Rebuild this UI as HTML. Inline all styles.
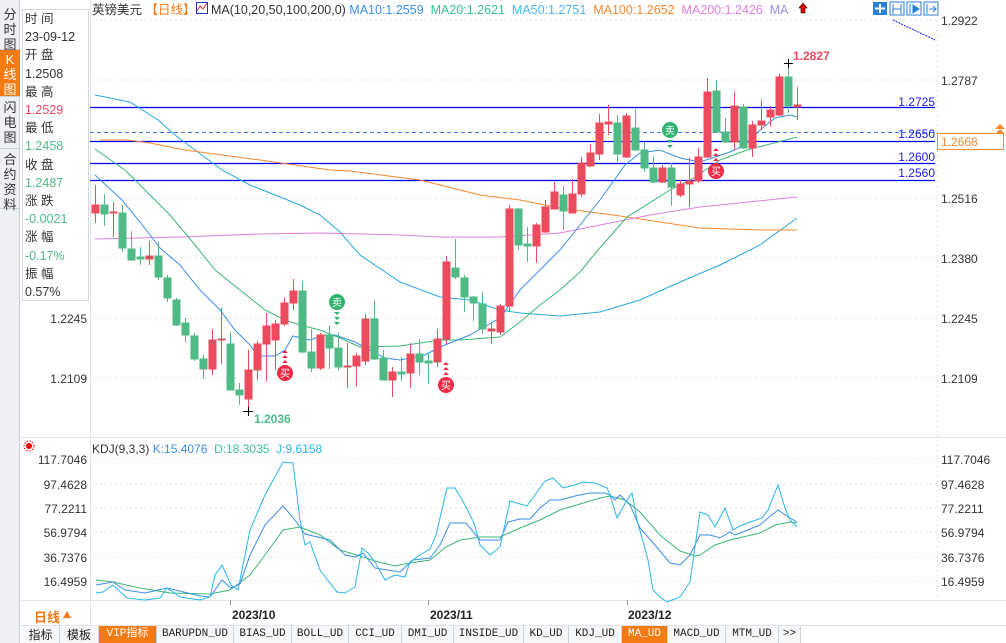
<!DOCTYPE html>
<html><head><meta charset="utf-8">
<style>
*{margin:0;padding:0;box-sizing:border-box}
body{width:1006px;height:643px;overflow:hidden;background:#fff;font-family:"Liberation Sans","Noto Sans CJK SC",sans-serif;position:relative;color:#333}
.abs{position:absolute}
.side{left:0;top:0;width:20px;height:643px;background:#eef0f4;border-right:1px solid #c9ced6}
.st{position:absolute;left:0;width:20px;font-size:13px;line-height:15px;text-align:center;color:#333;border-bottom:1px solid #c9ced6}
.info{left:22px;top:9px;width:67px;height:292px;border:1px solid #d4d8de;background:#fff;font-size:12.5px;line-height:18.2px;padding-left:2px}
.tabs{left:22px;top:626px;height:17px;width:984px;font-family:"Liberation Mono","Noto Sans CJK SC",monospace;font-size:11px}
.tab{position:absolute;top:0;height:17px;line-height:17px;text-align:center;border-right:1px solid #d0d4da;background:#f6f7f9;color:#222}
.tab.o{background:#f57a12;color:#fff}
.ax{font-size:12px;color:#333}
</style></head><body>
<div class="abs side">
 <div class="st" style="top:5px;height:45px;padding-top:2px">分<br>时<br>图</div>
 <div class="st" style="top:50px;height:47px;background:#f57a12;color:#fff;padding-top:2px">K<br>线<br>图</div>
 <div class="st" style="top:97px;height:52px;padding-top:3px">闪<br>电<br>图</div>
 <div class="st" style="top:149px;height:60px;padding-top:3px">合<br>约<br>资<br>料</div>
</div>
<div class="abs info">
时 间<br>23-09-12<br>开 盘<br>1.2508<br>最 高<br><span style="color:#e84a5f">1.2529</span><br>最 低<br><span style="color:#4fba86">1.2458</span><br>收 盘<br><span style="color:#4fba86">1.2487</span><br>涨 跌<br><span style="color:#4fba86">-0.0021</span><br>涨 幅<br><span style="color:#4fba86">-0.17%</span><br>振 幅<br>0.57%
</div>

<svg class="abs" style="left:0;top:0" width="1006" height="643">
 <g stroke="#e0e3e8" stroke-dasharray="2,3" stroke-width="1">
  <line x1="90" y1="20" x2="937" y2="20"/><line x1="90" y1="80" x2="937" y2="80"/>
  <line x1="90" y1="198" x2="937" y2="198"/><line x1="90" y1="258" x2="937" y2="258"/>
  <line x1="90" y1="318" x2="937" y2="318"/><line x1="90" y1="378" x2="937" y2="378"/>
  <line x1="90" y1="459" x2="937" y2="459"/><line x1="90" y1="484" x2="937" y2="484"/>
  <line x1="90" y1="508" x2="937" y2="508"/><line x1="90" y1="532" x2="937" y2="532"/>
  <line x1="90" y1="557" x2="937" y2="557"/><line x1="90" y1="581" x2="937" y2="581"/>
  <line x1="937.5" y1="20" x2="937.5" y2="600"/>
 </g>
 <line x1="90.5" y1="0" x2="90.5" y2="625" stroke="#dfe3e8"/>
 <line x1="20" y1="437.5" x2="1006" y2="437.5" stroke="#dfe3e8"/>
 <line x1="20" y1="600.5" x2="1006" y2="600.5" stroke="#dfe3e8"/>
 <line x1="20" y1="625.5" x2="1006" y2="625.5" stroke="#dfe3e8"/>
 <line x1="893" y1="20" x2="935" y2="40" stroke="#1a1aff" stroke-dasharray="2,1"/>
 <!-- horizontal levels -->
 <g stroke="#0000ff" stroke-width="1.3">
  <line x1="90" y1="107.5" x2="935" y2="107.5"/>
  <line x1="90" y1="141.5" x2="935" y2="141.5"/>
  <line x1="90" y1="163.5" x2="935" y2="163.5"/>
  <line x1="90" y1="180.5" x2="935" y2="180.5"/>
 </g>
 <line x1="90" y1="132.5" x2="937" y2="132.5" stroke="#3a7be0" stroke-dasharray="4,3"/>
 <!-- MAs -->
 <g fill="none" stroke-width="1">
  <polyline stroke="#29a9e0" points="95,95 130,102 158,120 175,135 195,150 222,170 250,185 300,205 320,215 340,232 360,255 400,282 440,297 470,300 500,310 520,313 560,316 600,312 640,300 680,282 720,265 760,245 797,218"/>
  <polyline stroke="#f7892e" points="100,140 127,140 150,143 185,150 260,160 330,170 350,171 420,180 480,195 520,200 560,208 620,216 700,228 760,230 797,230"/>
  <polyline stroke="#e07fdc" points="95,239 180,237 260,234 320,233 400,235 440,237 500,237 560,233 600,225 650,215 700,207 797,197"/>
  <polyline stroke="#3cb878" points="95,149 125,170 150,195 170,215 195,245 215,270 240,290 265,310 285,320 300,325 320,330 340,338 360,347 400,346 440,340 460,340 500,337 520,322 540,305 560,290 580,272 598,250 627,217 670,190 694,178 720,160 747,150 797,137"/>
  <polyline stroke="#3a8ee6" points="95,175 122,200 140,222 160,248 180,265 200,290 220,310 235,330 250,345 258,356 275,356 285,350 293,336 310,340 325,335 335,335 355,342 370,350 385,358 400,360 425,355 440,347 450,343 470,335 500,318 520,290 540,270 560,250 580,225 600,200 625,165 640,153 660,150 680,158 700,162 715,157 730,152 745,145 760,130 775,118 790,115 797,117"/>
 </g>
 <g id="c"></g>
 <!-- candles -->
 <g stroke-width="1">
 <!-- red -->
 <g fill="#eb4b5c" stroke="#eb4b5c">
 <line x1="95.5" y1="185" x2="95.5" y2="223"/><rect x="92" y="205" width="7" height="8"/>
 <line x1="113.5" y1="202" x2="113.5" y2="237"/><rect x="110" y="212" width="7" height="1"/>
 <line x1="149.5" y1="241" x2="149.5" y2="265"/><rect x="146" y="256" width="7" height="3"/>
 <line x1="212.5" y1="329" x2="212.5" y2="375"/><rect x="209" y="340" width="7" height="29"/>
 <line x1="221.5" y1="308" x2="221.5" y2="364"/><rect x="218" y="339" width="7" height="1"/>
 <line x1="248.5" y1="350" x2="248.5" y2="411"/><rect x="245" y="370" width="7" height="29"/>
 <line x1="257.5" y1="341" x2="257.5" y2="380"/><rect x="254" y="344" width="7" height="26"/>
 <line x1="266.5" y1="313" x2="266.5" y2="381"/><rect x="263" y="326" width="7" height="18"/>
 <line x1="275.5" y1="320" x2="275.5" y2="370"/><rect x="272" y="324" width="7" height="16"/>
 <line x1="284.5" y1="298" x2="284.5" y2="326"/><rect x="281" y="303" width="7" height="21"/>
 <line x1="293.5" y1="279" x2="293.5" y2="310"/><rect x="290" y="291" width="7" height="12"/>
 <line x1="320.5" y1="333" x2="320.5" y2="370"/><rect x="317" y="335" width="7" height="33"/>
 <line x1="347.5" y1="343" x2="347.5" y2="388"/><rect x="344" y="366" width="7" height="1"/>
 <line x1="356.5" y1="353" x2="356.5" y2="387"/><rect x="353" y="356" width="7" height="10"/>
 <line x1="365.5" y1="314" x2="365.5" y2="365"/><rect x="362" y="319" width="7" height="42"/>
 <line x1="392.5" y1="367" x2="392.5" y2="397"/><rect x="389" y="372" width="7" height="8"/>
 <line x1="410.5" y1="343" x2="410.5" y2="388"/><rect x="407" y="354" width="7" height="19"/>
 <line x1="437.5" y1="329" x2="437.5" y2="367"/><rect x="434" y="339" width="7" height="23"/>
 <line x1="446.5" y1="256" x2="446.5" y2="344"/><rect x="443" y="262" width="7" height="77"/>
 <line x1="491.5" y1="323" x2="491.5" y2="344"/><rect x="488" y="329" width="7" height="2"/>
 <line x1="500.5" y1="304" x2="500.5" y2="335"/><rect x="497" y="306" width="7" height="26"/>
 <line x1="509.5" y1="205" x2="509.5" y2="312"/><rect x="506" y="209" width="7" height="97"/>
 <line x1="536.5" y1="223" x2="536.5" y2="263"/><rect x="533" y="225" width="7" height="21"/>
 <line x1="545.5" y1="200" x2="545.5" y2="233"/><rect x="542" y="207" width="7" height="25"/>
 <line x1="554.5" y1="182" x2="554.5" y2="209"/><rect x="551" y="192" width="7" height="17"/>
 <line x1="572.5" y1="179" x2="572.5" y2="213"/><rect x="569" y="194" width="7" height="19"/>
 <line x1="581.5" y1="157" x2="581.5" y2="197"/><rect x="578" y="163" width="7" height="31"/>
 <line x1="590.5" y1="144" x2="590.5" y2="167"/><rect x="587" y="153" width="7" height="13"/>
 <line x1="599.5" y1="114" x2="599.5" y2="160"/><rect x="596" y="123" width="7" height="31"/>
 <line x1="608.5" y1="105" x2="608.5" y2="135"/><rect x="605" y="122" width="7" height="2"/>
 <line x1="626.5" y1="113" x2="626.5" y2="158"/><rect x="623" y="116" width="7" height="41"/>
 <line x1="662.5" y1="165" x2="662.5" y2="183"/><rect x="659" y="168" width="7" height="14"/>
 <line x1="680.5" y1="180" x2="680.5" y2="197"/><rect x="677" y="184" width="7" height="11"/>
 <line x1="689.5" y1="158" x2="689.5" y2="207"/><rect x="686" y="181" width="7" height="3"/>
 <line x1="698.5" y1="148" x2="698.5" y2="183"/><rect x="695" y="157" width="7" height="24"/>
 <line x1="707.5" y1="78" x2="707.5" y2="158"/><rect x="704" y="92" width="7" height="65"/>
 <line x1="734.5" y1="92" x2="734.5" y2="149"/><rect x="731" y="106" width="7" height="36"/>
 <line x1="752.5" y1="121" x2="752.5" y2="157"/><rect x="749" y="125" width="7" height="23"/>
 <line x1="761.5" y1="100" x2="761.5" y2="130"/><rect x="758" y="121" width="7" height="4"/>
 <line x1="770.5" y1="106" x2="770.5" y2="126"/><rect x="767" y="110" width="7" height="7"/>
 <line x1="779.5" y1="74" x2="779.5" y2="116"/><rect x="776" y="77" width="7" height="38"/>
 <line x1="797.5" y1="87" x2="797.5" y2="120"/><rect x="794" y="105" width="7" height="2"/>
 </g>
 <g fill="#4fba86" stroke="#4fba86">
 <line x1="104.5" y1="194" x2="104.5" y2="226"/><rect x="101" y="205" width="7" height="9"/>
 <line x1="122.5" y1="205" x2="122.5" y2="252"/><rect x="119" y="213" width="7" height="35"/>
 <line x1="131.5" y1="231" x2="131.5" y2="261"/><rect x="128" y="249" width="7" height="11"/>
 <line x1="140.5" y1="247" x2="140.5" y2="265"/><rect x="137" y="257" width="7" height="2"/>
 <line x1="158.5" y1="242" x2="158.5" y2="280"/><rect x="155" y="256" width="7" height="21"/>
 <line x1="167.5" y1="275" x2="167.5" y2="302"/><rect x="164" y="278" width="7" height="20"/>
 <line x1="176.5" y1="298" x2="176.5" y2="326"/><rect x="173" y="300" width="7" height="25"/>
 <line x1="185.5" y1="318" x2="185.5" y2="342"/><rect x="182" y="323" width="7" height="12"/>
 <line x1="194.5" y1="333" x2="194.5" y2="361"/><rect x="191" y="336" width="7" height="23"/>
 <line x1="203.5" y1="355" x2="203.5" y2="379"/><rect x="200" y="359" width="7" height="10"/>
 <line x1="230.5" y1="332" x2="230.5" y2="390"/><rect x="227" y="344" width="7" height="46"/>
 <line x1="239.5" y1="383" x2="239.5" y2="405"/><rect x="236" y="390" width="7" height="5"/>
 <line x1="302.5" y1="281" x2="302.5" y2="353"/><rect x="299" y="291" width="7" height="61"/>
 <line x1="311.5" y1="329" x2="311.5" y2="372"/><rect x="308" y="352" width="7" height="16"/>
 <line x1="329.5" y1="326" x2="329.5" y2="369"/><rect x="326" y="335" width="7" height="13"/>
 <line x1="338.5" y1="333" x2="338.5" y2="370"/><rect x="335" y="348" width="7" height="19"/>
 <line x1="374.5" y1="300" x2="374.5" y2="360"/><rect x="371" y="319" width="7" height="40"/>
 <line x1="383.5" y1="350" x2="383.5" y2="380"/><rect x="380" y="358" width="7" height="22"/>
 <line x1="401.5" y1="357" x2="401.5" y2="381"/><rect x="398" y="372" width="7" height="2"/>
 <line x1="419.5" y1="339" x2="419.5" y2="375"/><rect x="416" y="354" width="7" height="8"/>
 <line x1="428.5" y1="354" x2="428.5" y2="384"/><rect x="425" y="361" width="7" height="2"/>
 <line x1="455.5" y1="239" x2="455.5" y2="279"/><rect x="452" y="268" width="7" height="9"/>
 <line x1="464.5" y1="275" x2="464.5" y2="312"/><rect x="461" y="278" width="7" height="19"/>
 <line x1="473.5" y1="296" x2="473.5" y2="321"/><rect x="470" y="297" width="7" height="6"/>
 <line x1="482.5" y1="292" x2="482.5" y2="334"/><rect x="479" y="304" width="7" height="25"/>
 <line x1="518.5" y1="208" x2="518.5" y2="250"/><rect x="515" y="209" width="7" height="36"/>
 <line x1="527.5" y1="227" x2="527.5" y2="262"/><rect x="524" y="244" width="7" height="2"/>
 <line x1="563.5" y1="186" x2="563.5" y2="230"/><rect x="560" y="195" width="7" height="16"/>
 <line x1="617.5" y1="115" x2="617.5" y2="162"/><rect x="614" y="123" width="7" height="31"/>
 <line x1="635.5" y1="109" x2="635.5" y2="150"/><rect x="632" y="128" width="7" height="22"/>
 <line x1="644.5" y1="142" x2="644.5" y2="172"/><rect x="641" y="150" width="7" height="18"/>
 <line x1="653.5" y1="157" x2="653.5" y2="183"/><rect x="650" y="168" width="7" height="14"/>
 <line x1="671.5" y1="163" x2="671.5" y2="206"/><rect x="668" y="168" width="7" height="19"/>
 <line x1="716.5" y1="80" x2="716.5" y2="133"/><rect x="713" y="91" width="7" height="41"/>
 <line x1="725.5" y1="118" x2="725.5" y2="143"/><rect x="722" y="132" width="7" height="10"/>
 <line x1="743.5" y1="104" x2="743.5" y2="149"/><rect x="740" y="107" width="7" height="41"/>
 <line x1="788.5" y1="63" x2="788.5" y2="113"/><rect x="785" y="77" width="7" height="29"/>
 </g>
 </g>
 <!-- markers -->
 <g stroke="#000"><line x1="784" y1="63.5" x2="793" y2="63.5"/><line x1="788.5" y1="59" x2="788.5" y2="68"/>
 <line x1="243" y1="411.5" x2="253" y2="411.5"/><line x1="248.5" y1="407" x2="248.5" y2="416"/></g>
 <text x="793" y="60" font-size="12" font-weight="bold" fill="#e84a5f" font-family="Liberation Sans">1.2827</text>
 <text x="254" y="423" font-size="12" font-weight="bold" fill="#4fba86" font-family="Liberation Sans">1.2036</text>
 <g font-size="10" font-family="Noto Sans CJK SC,sans-serif" text-anchor="middle" fill="#fff">
  <circle cx="337" cy="302" r="8" fill="#2fb36e"/><text x="337" y="306">卖</text>
  <path d="M334,312h6l-3,3zM334,317h6l-3,3zM334,322h6l-3,3z" fill="#2fb36e"/>
  <circle cx="670" cy="130" r="8" fill="#2fb36e"/><text x="670" y="134">卖</text>
  <path d="M667,140h6l-3,3zM667,145h6l-3,3z" fill="#2fb36e"/>
  <circle cx="285" cy="373" r="8" fill="#ee2a45"/><text x="285" y="377">买</text>
  <path d="M282,353h6l-3,-3zM282,358h6l-3,-3zM282,363h6l-3,-3z" fill="#ee2a45"/>
  <circle cx="446" cy="385" r="8" fill="#ee2a45"/><text x="446" y="389">买</text>
  <path d="M443,365h6l-3,-3zM443,370h6l-3,-3zM443,375h6l-3,-3z" fill="#ee2a45"/>
  <circle cx="716" cy="171" r="8" fill="#ee2a45"/><text x="716" y="175">买</text>
  <path d="M713,151h6l-3,-3zM713,156h6l-3,-3zM713,161h6l-3,-3z" fill="#ee2a45"/>
 </g>
 <!-- level labels -->
 <g font-size="12" fill="#1a1aff" text-anchor="end" font-family="Liberation Sans">
  <text x="935" y="106">1.2725</text><text x="935" y="138">1.2650</text>
  <text x="935" y="161">1.2600</text><text x="935" y="177">1.2560</text>
 </g>
 <!-- right axis -->
 <g class="ax" font-size="12" fill="#333" font-family="Liberation Sans">
  <text x="941" y="25">1.2922</text><text x="941" y="85">1.2787</text>
  <text x="941" y="203">1.2516</text><text x="941" y="263">1.2380</text>
  <text x="941" y="323">1.2245</text><text x="941" y="383">1.2109</text>
  <text x="941" y="464">117.7046</text><text x="941" y="489">97.4628</text>
  <text x="941" y="513">77.2211</text><text x="941" y="537">56.9794</text>
  <text x="941" y="562">36.7376</text><text x="941" y="586">16.4959</text>
 </g>
 <g font-size="12" fill="#333" text-anchor="end" font-family="Liberation Sans">
  <text x="87" y="323">1.2245</text><text x="87" y="383">1.2109</text>
  <text x="87" y="464">117.7046</text><text x="87" y="489">97.4628</text>
  <text x="87" y="513">77.2211</text><text x="87" y="537">56.9794</text>
  <text x="87" y="562">36.7376</text><text x="87" y="586">16.4959</text>
 </g>
 <rect x="937.5" y="133.5" width="66" height="16" fill="#fff" stroke="#f7892e"/>
 <text x="941" y="146" font-size="12" fill="#f7892e" font-family="Liberation Sans">1.2668</text>
 <path d="M995,129l5,-5l5,5zM995,134l5,-5l5,5z" fill="#f7892e"/>
 <!-- KDJ -->
 <g fill="none" stroke-width="1">
  <polyline stroke="#3cb878" points="96,580 113,582 140,588 170,593 210,594 230,590 250,575 265,555 283,530 300,527 320,535 340,550 360,556 375,561 395,566 410,563 430,560 446,547 460,540 480,537 500,537 520,528 540,520 560,510 580,504 600,498 610,496 625,500 640,512 660,535 680,551 695,556 700,555 715,545 730,540 760,533 775,525 790,522 797,523"/>
  <polyline stroke="#3a8ee6" points="96,585 113,582 125,590 145,593 167,588 200,596 210,597 222,580 231,588 240,584 250,555 265,525 283,506 295,520 305,534 330,540 345,555 355,557 363,553 375,568 400,572 413,560 430,558 440,545 450,523 466,523 480,540 500,540 508,522 520,519 530,519 540,508 550,500 560,500 575,496 590,493 605,493 610,495 615,500 620,495 630,505 640,528 655,545 670,563 680,565 690,555 700,535 710,535 720,538 730,532 735,535 745,531 760,525 768,518 778,510 790,518 797,522"/>
  <polyline stroke="#29b6e8" points="96,593 103,592 113,585 127,598 145,600 160,598 167,588 180,597 200,600 210,597 215,575 222,565 231,585 238,590 250,530 265,495 283,462 293,463 300,520 305,545 310,542 320,570 337,592 345,593 355,587 362,548 368,553 375,562 385,580 395,575 405,577 410,562 420,555 430,549 436,535 447,488 455,488 465,505 474,523 480,545 490,555 500,547 510,501 527,506 537,492 545,481 553,478 563,488 575,485 583,482 595,483 607,488 610,495 617,518 627,500 632,493 637,520 648,560 653,590 660,597 667,602 680,597 690,582 700,512 708,515 715,527 725,508 733,530 740,526 750,522 762,518 768,510 778,485 785,508 790,520 797,527"/>
 </g>
 <!-- top right icons -->
 <g>
  <rect x="873" y="2" width="14" height="13" fill="#2a7fd4"/><path d="M880,4v9M875,8.5h10" stroke="#fff" stroke-width="2"/>
  <rect x="890" y="2" width="14" height="13" fill="#fff" stroke="#2a7fd4"/><path d="M893,4v10M901,4v10M893,9h8" stroke="#2a7fd4"/>
  <rect x="907" y="2" width="14" height="13" fill="#fff" stroke="#2a7fd4"/><path d="M910,4v10M913,5l6,4l-6,4z" stroke="#2a7fd4" fill="#2a7fd4"/>
  <rect x="924" y="2" width="14" height="13" fill="#fff" stroke="#2a7fd4"/><path d="M927,4v10M929,9h7M933,6l3,3l-3,3" stroke="#2a7fd4" fill="none"/>
 </g>
 <!-- MA legend icon -->
 <rect x="196.5" y="2.5" width="11" height="11" fill="#fff" stroke="#1a3cb4"/>
 <path d="M197,11l3,-5l3,3l4,-6" stroke="#e0282e" fill="none"/>
 <path d="M803,3l-4,5h2v5h4v-5h2z" fill="#e00" stroke="#000" stroke-width=".6"/>
 <!-- sun icon -->
 <circle cx="29" cy="446" r="3" fill="#e00"/><circle cx="29" cy="446" r="5" fill="none" stroke="#e00" stroke-dasharray="1.5,1.5"/>
 <!-- date ticks -->
 <g stroke="#999"><line x1="230.5" y1="600" x2="230.5" y2="605"/><line x1="428.5" y1="600" x2="428.5" y2="605"/><line x1="627.5" y1="600" x2="627.5" y2="605"/></g>
 <g font-size="12" font-weight="bold" fill="#222" font-family="Liberation Sans">
  <text x="232" y="619">2023/10</text><text x="430" y="619">2023/11</text><text x="628" y="619">2023/12</text>
 </g>
 <text x="34" y="622" font-size="13" fill="#f57a12" font-weight="bold" font-family="Liberation Sans,Noto Sans CJK SC,sans-serif">日线</text>
 <path d="M63,618l4,-7l4,7z" fill="#f57a12"/>
</svg>

<div class="abs" style="left:92px;top:2px;font-size:12.5px;white-space:nowrap;line-height:16px">英镑美元 <span style="color:#f57a12">【日线】</span></div>
<div class="abs" style="left:211px;top:2px;font-size:12.5px;white-space:nowrap;line-height:16px">MA(10,20,50,100,200,0) <span style="color:#3a8ee6">MA10:1.2559</span>&nbsp; <span style="color:#3cc090">MA20:1.2621</span>&nbsp; <span style="color:#4ab8e8">MA50:1.2751</span>&nbsp; <span style="color:#f7892e">MA100:1.2652</span>&nbsp; <span style="color:#e07fdc">MA200:1.2426</span>&nbsp; <span style="color:#9b8ee8">MA</span></div>
<div class="abs" style="left:92px;top:441px;font-size:12px;white-space:nowrap;line-height:16px">KDJ(9,3,3) <span style="color:#3a8ee6">K:15.4076</span>&nbsp; <span style="color:#3cc090">D:18.3035</span>&nbsp; <span style="color:#29b6e8">J:9.6158</span></div>

<div class="abs tabs">
 <div class="tab" style="left:0;width:38px;font-family:'Noto Sans CJK SC',sans-serif;font-size:12px">指标</div>
 <div class="tab" style="left:38px;width:39px;font-family:'Noto Sans CJK SC',sans-serif;font-size:12px">模板</div>
 <div class="tab o" style="left:77px;width:58px">VIP指标</div>
 <div class="tab" style="left:135px;width:77px">BARUPDN_UD</div>
 <div class="tab" style="left:212px;width:58px">BIAS_UD</div>
 <div class="tab" style="left:270px;width:57px">BOLL_UD</div>
 <div class="tab" style="left:327px;width:53px">CCI_UD</div>
 <div class="tab" style="left:380px;width:52px">DMI_UD</div>
 <div class="tab" style="left:432px;width:70px">INSIDE_UD</div>
 <div class="tab" style="left:502px;width:45px">KD_UD</div>
 <div class="tab" style="left:547px;width:53px">KDJ_UD</div>
 <div class="tab o" style="left:600px;width:46px">MA_UD</div>
 <div class="tab" style="left:646px;width:58px">MACD_UD</div>
 <div class="tab" style="left:704px;width:53px">MTM_UD</div>
 <div class="tab" style="left:757px;width:22px">&gt;&gt;</div>
</div>
</body></html>
